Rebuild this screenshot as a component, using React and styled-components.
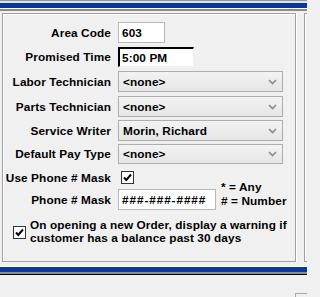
import styled, { createGlobalStyle } from 'styled-components'

const Global = createGlobalStyle`
    html, body {
        margin: 0;
        padding: 0;
        background: #f0f0f0;
    }
    body {
        font-family: "Liberation Sans", Arial, sans-serif;
        font-size: 11.8px;
        font-weight: bold;
        letter-spacing: 0.1px;
        color: #000;
    }
`

const Page = styled.div`
    width: 307px;
    height: 297px;
    overflow: hidden;
    display: flex;
    flex-direction: column;
`

const Stripe = styled.div`
    height: ${p => p.$h}px;
    background: ${p => p.$c};
    flex-shrink: 0;
`

const Main = styled.div`
    display: flex;
    gap: 8px;
    padding-left: 2px;
    margin-top: 2px;
    height: 249px;
    flex-shrink: 0;
`

const Group = styled.div`
    box-sizing: border-box;
    width: ${p => p.$w}px;
    flex-shrink: 0;
    height: 100%;
    border: 1px solid #a0a0a0;
    box-shadow: inset 1px 1px 0 #fff, 1px 1px 0 #fff;
    padding-top: 8px;
    display: flex;
    flex-direction: column;
`

const Field = styled.div`
    display: grid;
    grid-template-columns: 108px auto;
    column-gap: 7px;
    align-items: center;
    height: ${p => p.$h}px;
    margin-top: ${p => p.$mt || 0}px;
`

const Label = styled.div`
    text-align: right;
    white-space: nowrap;
`

const TextBox = styled.div`
    box-sizing: border-box;
    width: ${p => p.$w}px;
    height: ${p => p.$h}px;
    background: #fff;
    border: 1px solid #b8b8b8;
    padding-left: 3px;
    display: flex;
    align-items: center;
    white-space: nowrap;
    letter-spacing: ${p => p.$ls || 0.1}px;
`

const SunkenBox = styled(TextBox)`
    border-top: 2px solid #000;
    border-left: 2px solid #000;
    border-right: 1px solid #f4f4f4;
    border-bottom: 1px solid #f4f4f4;
    padding-left: 2px;
`

const Select = styled.div`
    box-sizing: border-box;
    width: 165px;
    height: ${p => p.$h}px;
    border: 1px solid #adadad;
    background: linear-gradient(#f3f3f3, #e6e6e6);
    display: flex;
    align-items: center;
    justify-content: space-between;
    padding: 0 5px 0 4px;
    white-space: nowrap;
`

const Chevron = () => (
    <svg width="9" height="6" viewBox="0 0 9 6">
        <polyline points="1,1 4.5,4.5 8,1" fill="none" stroke="#8a8a8a" strokeWidth="1.6" />
    </svg>
)

const Box = styled.div`
    box-sizing: border-box;
    width: 13px;
    height: 13px;
    background: #fff;
    border: 1px solid #333;
    display: flex;
    align-items: center;
    justify-content: center;
    margin-left: ${p => p.$ml || 0}px;
    flex-shrink: 0;
`

const Tick = () => (
    <svg width="9" height="9" viewBox="0 0 9 9">
        <polyline points="1,4.5 3.3,7 8,1.5" fill="none" stroke="#000" strokeWidth="2" />
    </svg>
)

const MaskBlock = styled.div`
    display: flex;
    align-items: flex-end;
    margin-top: 5px;
`

const MaskCol = styled.div`
    display: flex;
    flex-direction: column;
`

const Note = styled.div`
    margin-left: 5px;
    padding-bottom: 2px;
    line-height: 14px;
    white-space: nowrap;
`

const Warning = styled.div`
    display: flex;
    align-items: center;
    gap: 4px;
    padding-left: 10px;
    margin-top: 9px;
    line-height: 13px;
    white-space: nowrap;
`

const Corner = styled.div`
    flex-shrink: 0;
    margin: 18px 0 0 295px;
    width: 20px;
    height: 10px;
    border-top: 1px solid #a8a8a8;
    border-left: 1px solid #a8a8a8;
`

function App() {
    return <Page>
        <Global />
        <Stripe $h={1} $c="#8e97a4" />
        <Stripe $h={2} $c="#dde4ef" />
        <Stripe $h={5} $c="#0a3998" />
        <Stripe $h={1} $c="#ffffff" />
        <Stripe $h={2} $c="#8a8a8a" />

        <Main>
            <Group $w={294}>
                <Field $h={21}>
                    <Label>Area Code</Label>
                    <TextBox $w={47} $h={21}>603</TextBox>
                </Field>
                <Field $h={20} $mt={4}>
                    <Label>Promised Time</Label>
                    <SunkenBox $w={76} $h={20}>5:00 PM</SunkenBox>
                </Field>
                <Field $h={21} $mt={4}>
                    <Label>Labor Technician</Label>
                    <Select $h={21}>&lt;none&gt;<Chevron /></Select>
                </Field>
                <Field $h={21} $mt={4}>
                    <Label>Parts Technician</Label>
                    <Select $h={21}>&lt;none&gt;<Chevron /></Select>
                </Field>
                <Field $h={21} $mt={3}>
                    <Label>Service Writer</Label>
                    <Select $h={21}>Morin, Richard<Chevron /></Select>
                </Field>
                <Field $h={20} $mt={3}>
                    <Label>Default Pay Type</Label>
                    <Select $h={20}>&lt;none&gt;<Chevron /></Select>
                </Field>
                <MaskBlock>
                    <MaskCol>
                        <Field $h={17}>
                            <Label>Use Phone # Mask</Label>
                            <Box $ml={3}><Tick /></Box>
                        </Field>
                        <Field $h={21} $mt={3}>
                            <Label>Phone # Mask</Label>
                            <TextBox $w={98} $h={21} $ls={0.9}>###-###-####</TextBox>
                        </Field>
                    </MaskCol>
                    <Note>* = Any<br />#&nbsp;= Number</Note>
                </MaskBlock>
                <Warning>
                    <Box><Tick /></Box>
                    <div>On opening a new Order, display a warning if<br />customer has a balance past 30 days</div>
                </Warning>
            </Group>
            <Group $w={20} />
        </Main>

        <Stripe $h={4} $c="#f0f0f0" />
        <Stripe $h={1} $c="#ffffff" />
        <Stripe $h={5} $c="#0a3998" />
        <Stripe $h={2} $c="#8a8a8a" />
        <Stripe $h={1} $c="#000000" />
        <Corner />
    </Page>
}

export default App
